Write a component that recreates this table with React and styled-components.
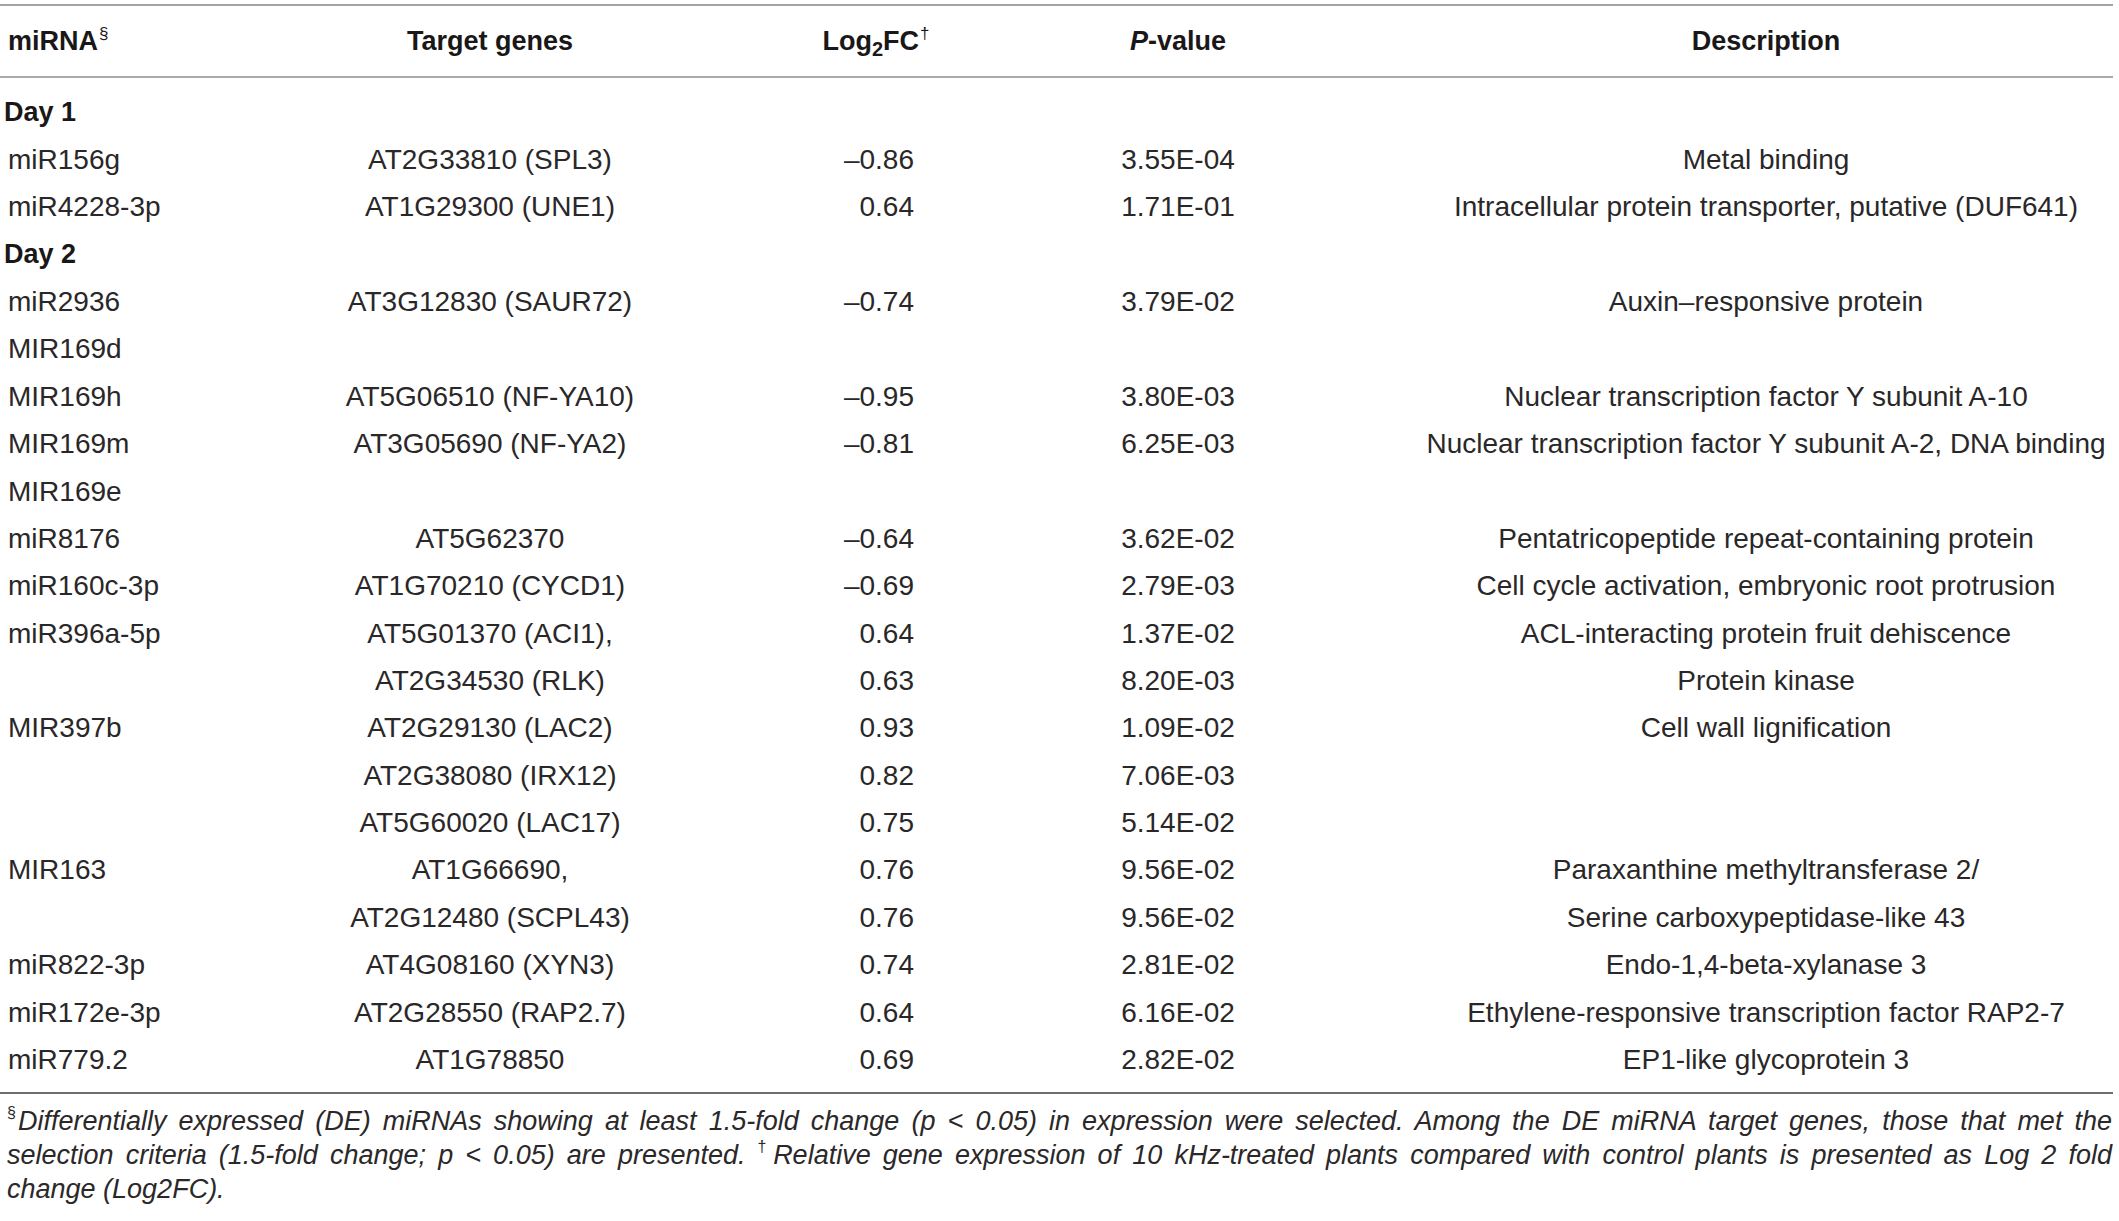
import styled, { createGlobalStyle } from 'styled-components';

const COLUMNS = '165px 650px 122px 482px 694px';

const ROWS = [
    { day: 'Day 1' },
    ['miR156g', 'AT2G33810 (SPL3)', '–0.86', '3.55E-04', 'Metal binding'],
    ['miR4228-3p', 'AT1G29300 (UNE1)', '0.64', '1.71E-01', 'Intracellular protein transporter, putative (DUF641)'],
    { day: 'Day 2' },
    ['miR2936', 'AT3G12830 (SAUR72)', '–0.74', '3.79E-02', 'Auxin–responsive protein'],
    ['MIR169d', '', '', '', ''],
    ['MIR169h', 'AT5G06510 (NF-YA10)', '–0.95', '3.80E-03', 'Nuclear transcription factor Y subunit A-10'],
    ['MIR169m', 'AT3G05690 (NF-YA2)', '–0.81', '6.25E-03', 'Nuclear transcription factor Y subunit A-2, DNA binding'],
    ['MIR169e', '', '', '', ''],
    ['miR8176', 'AT5G62370', '–0.64', '3.62E-02', 'Pentatricopeptide repeat-containing protein'],
    ['miR160c-3p', 'AT1G70210 (CYCD1)', '–0.69', '2.79E-03', 'Cell cycle activation, embryonic root protrusion'],
    ['miR396a-5p', 'AT5G01370 (ACI1),', '0.64', '1.37E-02', 'ACL-interacting protein fruit dehiscence'],
    ['', 'AT2G34530 (RLK)', '0.63', '8.20E-03', 'Protein kinase'],
    ['MIR397b', 'AT2G29130 (LAC2)', '0.93', '1.09E-02', 'Cell wall lignification'],
    ['', 'AT2G38080 (IRX12)', '0.82', '7.06E-03', ''],
    ['', 'AT5G60020 (LAC17)', '0.75', '5.14E-02', ''],
    ['MIR163', 'AT1G66690,', '0.76', '9.56E-02', 'Paraxanthine methyltransferase 2/'],
    ['', 'AT2G12480 (SCPL43)', '0.76', '9.56E-02', 'Serine carboxypeptidase-like 43'],
    ['miR822-3p', 'AT4G08160 (XYN3)', '0.74', '2.81E-02', 'Endo-1,4-beta-xylanase 3'],
    ['miR172e-3p', 'AT2G28550 (RAP2.7)', '0.64', '6.16E-02', 'Ethylene-responsive transcription factor RAP2-7'],
    ['miR779.2', 'AT1G78850', '0.69', '2.82E-02', 'EP1-like glycoprotein 3']
];

const GlobalStyle = createGlobalStyle`
    html, body {
        margin: 0;
        padding: 0;
        background: #ffffff;
    }
    body {
        font-family: 'Liberation Sans', Arial, sans-serif;
        color: #2a2728;
    }
`;

function App() {
    return (
        <Page>
            <GlobalStyle />
            <Table>
                <HeadRow>
                    <MirnaCell>
                        miRNA<HeadSup>§</HeadSup>
                    </MirnaCell>
                    <CenterCell>
                        <span>Target genes</span>
                    </CenterCell>
                    <CenterCell>
                        <span>
                            Log<Sub>2</Sub>FC<HeadSup>†</HeadSup>
                        </span>
                    </CenterCell>
                    <CenterCell>
                        <span>
                            <i>P</i>-value
                        </span>
                    </CenterCell>
                    <CenterCell>
                        <span>Description</span>
                    </CenterCell>
                </HeadRow>
                <Body>
                    {ROWS.map((row, i) =>
                        row.day ? (
                            <DayRow key={i}>{row.day}</DayRow>
                        ) : (
                            <Row key={i}>
                                <MirnaCell>{row[0]}</MirnaCell>
                                <CenterCell>{row[1]}</CenterCell>
                                <FoldCell>{row[2]}</FoldCell>
                                <CenterCell>{row[3]}</CenterCell>
                                <CenterCell>{row[4]}</CenterCell>
                            </Row>
                        )
                    )}
                </Body>
            </Table>
            <Notes>
                <NoteLine>
                    <NoteSup>§</NoteSup>Differentially expressed (DE) miRNAs showing at least 1.5-fold change (p &lt; 0.05) in
                    expression were selected. Among the DE miRNA target genes, those that met the
                </NoteLine>
                <NoteLine>
                    selection criteria (1.5-fold change; p &lt; 0.05) are presented. <NoteSup>†</NoteSup>Relative gene
                    expression of 10 kHz-treated plants compared with control plants is presented as Log 2 fold
                </NoteLine>
                <NoteLine last>change (Log2FC).</NoteLine>
            </Notes>
        </Page>
    );
}

export default App;

const Page = styled.div`
    width: 2119px;
    padding-top: 4px;
`;

const Table = styled.div`
    width: 2113px;
    border-top: 2px solid #a3a3a3;
    border-bottom: 2px solid #6e6e6e;
`;

const Row = styled.div`
    display: grid;
    grid-template-columns: ${COLUMNS};
    align-items: center;
    height: 47.37px;
    font-size: 28px;
    white-space: nowrap;
`;

const HeadRow = styled(Row)`
    height: 70px;
    font-size: 27px;
    font-weight: 700;
    color: #1a1718;
    border-bottom: 2px solid #aaaaaa;
`;

const DayRow = styled.div`
    height: 47.37px;
    display: flex;
    align-items: center;
    padding-left: 4px;
    font-size: 27px;
    font-weight: 700;
    color: #1a1718;
`;

const Body = styled.div`
    padding: 11px 0 8px;
`;

const MirnaCell = styled.div`
    padding-left: 8px;
`;

const CenterCell = styled.div`
    display: flex;
    justify-content: center;
`;

const FoldCell = styled.div`
    text-align: right;
    padding-right: 23px;
`;

const HeadSup = styled.sup`
    font-size: 17px;
    font-weight: 400;
    vertical-align: 11px;
    line-height: 0;
    margin-left: 1px;
`;

const Sub = styled.sub`
    font-size: 20px;
    vertical-align: -6px;
    line-height: 0;
`;

const Notes = styled.div`
    width: 2105px;
    padding: 10px 0 0 7px;
    font-size: 27px;
    line-height: 34px;
    font-style: italic;
    color: #2b2829;
`;

const NoteLine = styled.div`
    text-align: ${({ last }) => (last ? 'left' : 'justify')};
    text-align-last: ${({ last }) => (last ? 'left' : 'justify')};
`;

const NoteSup = styled.sup`
    font-size: 16px;
    font-style: normal;
    vertical-align: 12px;
    line-height: 0;
    margin-right: 2px;
`;
